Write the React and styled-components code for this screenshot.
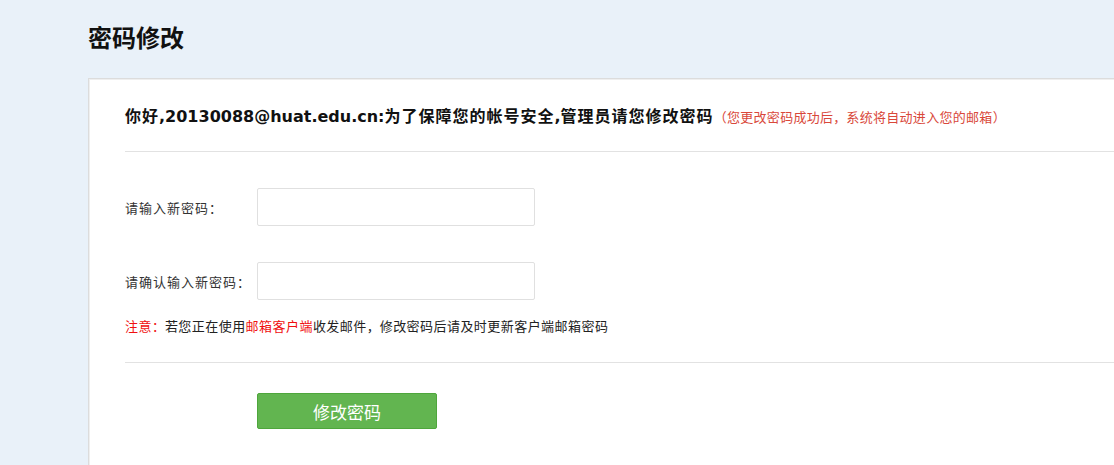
import React from "react";
import styled, { createGlobalStyle } from "styled-components";

const Global = createGlobalStyle`
  html, body {
    margin: 0;
    padding: 0;
    overflow: hidden;
    background: #e9f1f9;
    font-family: "DejaVu Sans", "Noto Sans CJK SC", sans-serif;
    color: #333;
  }
`;

const Page = styled.div`
  padding-left: 88px;
  width: 1200px;
  min-height: 465px;
`;

const Title = styled.h1`
  margin: 0;
  padding-top: 22px;
  font-size: 24px;
  line-height: 30px;
  font-weight: bold;
  color: #111;
  font-family: "Noto Sans CJK SC", sans-serif;
`;

const Card = styled.div`
  margin-top: 26px;
  width: 1100px;
  min-height: 420px;
  background: #fff;
  border: 1px solid #dcdcdc;
  box-shadow: inset 1px 1px 0 #efefef;
  padding: 0 0 40px 36px;
`;

const Header = styled.div`
  height: 24px;
  padding: 24px 0;
  border-bottom: 1px solid #e2e2e2;
  line-height: 24px;
  white-space: nowrap;
`;

const Greeting = styled.span`
  font-size: 16px;
  font-weight: bold;
  color: #111;
`;

const Cjk = styled.span`
  font-family: "Noto Sans CJK SC", sans-serif;
  letter-spacing: ${(p) => p.$spacing || 0}px;
`;

const Punct = styled.span`
  display: inline-block;
  width: 1em;
  text-align: ${(p) => p.$align || "left"};
  letter-spacing: 0;
`;

const Hint = styled.span`
  margin-left: 0;
  font-family: "Noto Sans CJK SC", sans-serif;
  font-size: 13px;
  letter-spacing: 0.3px;
  color: #d9483a;
`;

const Form = styled.div`
  padding-top: 36px;
  border-bottom: 1px solid #e2e2e2;
  padding-bottom: 26px;
`;

const Row = styled.div`
  display: flex;
  align-items: center;
  margin-bottom: ${(p) => p.$gap || 0}px;
`;

const Label = styled.label`
  width: 132px;
  flex: none;
  font-family: "Noto Sans CJK SC", sans-serif;
  font-size: 13px;
  letter-spacing: 1px;
  color: #333;
`;

const Input = styled.input`
  box-sizing: border-box;
  width: 278px;
  height: 38px;
  border: 1px solid #e0e0e0;
  border-radius: 2px;
  outline: none;
  padding: 0 8px;
  font-size: 14px;
`;

const Note = styled.p`
  margin: 16px 0 0;
  font-family: "Noto Sans CJK SC", sans-serif;
  font-size: 13px;
  letter-spacing: 0.45px;
  line-height: 20px;
  color: #222;
`;

const Red = styled.span`
  color: #f01010;
`;

const Actions = styled.div`
  padding: 30px 0 0 132px;
`;

const Button = styled.button`
  box-sizing: border-box;
  width: 180px;
  height: 36px;
  background: #62b550;
  border: 1px solid #4ea63c;
  border-radius: 2px;
  color: #fff;
  font-family: "Noto Sans CJK SC", sans-serif;
  font-size: 17px;
  cursor: pointer;
`;

export default function App() {
  return (
    <>
      <Global />
      <Page>
        <Title>密码修改</Title>
        <Card>
          <Header>
            <Greeting>
              <Cjk $spacing={1}>你好</Cjk>,20130088@huat.edu.cn:
              <Cjk $spacing={1}>为了保障您的帐号安全</Cjk>,
              <Cjk $spacing={1}>管理员请您修改密码</Cjk>
            </Greeting>
            <Hint>
              （您更改密码成功后<Punct>，</Punct>系统将自动进入您的邮箱）
            </Hint>
          </Header>
          <Form>
            <Row $gap={36}>
              <Label>
                请输入新密码<Punct $align="center">：</Punct>
              </Label>
              <Input type="password" />
            </Row>
            <Row>
              <Label>
                请确认输入新密码<Punct $align="center">：</Punct>
              </Label>
              <Input type="password" />
            </Row>
            <Note>
              <Red>
                注意<Punct $align="center">：</Punct>
              </Red>
              若您正在使用<Red>邮箱客户端</Red>收发邮件<Punct>，</Punct>修改密码后请及时更新客户端邮箱密码
            </Note>
          </Form>
          <Actions>
            <Button>修改密码</Button>
          </Actions>
        </Card>
      </Page>
    </>
  );
}
